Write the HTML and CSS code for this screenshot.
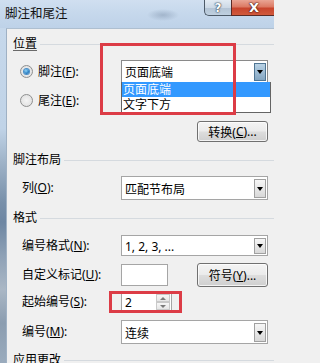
FILE: index.html
```html
<!DOCTYPE html>
<html lang="zh-CN">
<head>
<meta charset="utf-8">
<title>脚注和尾注</title>
<link rel="stylesheet" href="styles.css">
</head>
<body>
<div class="window">
  <div class="titlebar">
    <span class="title">脚注和尾注</span>
    <div class="caption-btns">
      <span class="cbtn help">?</span>
      <span class="cbtn close">X</span>
    </div>
  </div>
  <div class="frame">
    <div class="glass"></div>
    <div class="content">
      <div class="head head-first"><span class="head-text underlined">位置</span><span class="rule"></span></div>

      <div class="row radio-row h23 mt8">
        <div class="lbl radio-lbl"><span class="radio checked"></span>脚注(<u>F</u>):</div>
        <div class="combo open">
          <span class="combo-text">页面底端</span>
          <span class="drop drop-open"><i class="tri"></i></span>
          <div class="listbox">
            <div class="item selected">页面底端</div>
            <div class="item">文字下方</div>
          </div>
        </div>
      </div>

      <div class="row radio-row h23 mt6">
        <div class="lbl radio-lbl"><span class="radio"></span>尾注(<u>E</u>):</div>
      </div>

      <div class="row btn-row h21 mt9">
        <div class="btn">转换(<u>C</u>)...</div>
      </div>

      <div class="head mt10"><span class="head-text">脚注布局</span><span class="rule"></span></div>

      <div class="row h24 mt8">
        <div class="lbl">列(<u>O</u>):</div>
        <div class="combo">
          <span class="combo-text">匹配节布局</span>
          <span class="drop"><i class="tri"></i></span>
        </div>
      </div>

      <div class="head mt10"><span class="head-text">格式</span><span class="rule"></span></div>

      <div class="row h21 mt9">
        <div class="lbl">编号格式(<u>N</u>):</div>
        <div class="combo">
          <span class="combo-text">1, 2, 3, ...</span>
          <span class="drop"><i class="tri"></i></span>
        </div>
      </div>

      <div class="row h24 mt7">
        <div class="lbl">自定义标记(<u>U</u>):</div>
        <div class="field"></div>
        <div class="spacer"></div>
        <div class="btn">符号(<u>Y</u>)...</div>
      </div>

      <div class="row h20 mt5">
        <div class="lbl">起始编号(<u>S</u>):</div>
        <div class="spin">
          <span class="spin-text">2</span>
          <span class="spin-btns">
            <span class="sb"><i class="up"></i></span>
            <span class="sb"><i class="down"></i></span>
          </span>
        </div>
      </div>

      <div class="row h24 mt8">
        <div class="lbl">编号(<u>M</u>):</div>
        <div class="combo">
          <span class="combo-text">连续</span>
          <span class="drop"><i class="tri"></i></span>
        </div>
      </div>

      <div class="head mt8"><span class="head-text">应用更改</span><span class="rule"></span></div>

      <div class="mark mark-1"></div>
      <div class="mark mark-2"></div>
    </div>
  </div>
</div>
</body>
</html>
```
FILE: styles.css
```css
html, body {
  margin: 0;
  padding: 0;
}
body {
  width: 274px;
  height: 363px;
  overflow: hidden;
  background: #f0f0f0;
  font-family: "Noto Sans", "Noto Sans CJK SC", sans-serif;
  font-size: 12px;
  color: #000;
}
u { text-decoration: underline; text-underline-offset: 1px; }

.window {
  width: 274px;
  height: 363px;
  display: flex;
  flex-direction: column;
  overflow: hidden;
}

/* title bar */
.titlebar {
  height: 28px;
  flex: none;
  display: flex;
  align-items: flex-start;
  background:
    radial-gradient(ellipse 16px 6px at 163px 15px, rgba(120,140,165,0.45), rgba(120,140,165,0) 100%),
    linear-gradient(180deg, #d0dff0 0%, #c6d8ec 45%, #bed2e8 100%);
}
.title {
  margin-left: 5px;
  line-height: 27px;
  font-size: 12.5px;
  color: #111;
}
.caption-btns {
  margin-left: auto;
  display: flex;
  height: 16px;
}
.cbtn {
  box-sizing: border-box;
  height: 16px;
  display: flex;
  align-items: center;
  justify-content: center;
  font-family: "DejaVu Sans", sans-serif;
  font-weight: bold;
  color: #fff;
  border: 1px solid #4d5a68;
  border-top: none;
}
.help {
  width: 27px;
  border-radius: 0 0 0 5px;
  border-right: none;
  font-size: 12px;
  background: linear-gradient(180deg, #e3ebf3 0%, #cdd9e6 50%, #b3c3d4 51%, #bfd0e0 100%);
  text-shadow: 0 0 1px #3b4a5a, 0 0 1px #3b4a5a, 0 0 2px #3b4a5a;
}
.close {
  width: 46px;
  margin-right: -3px;
  font-size: 13px;
  background: linear-gradient(180deg, #e9a594 0%, #dc7a64 45%, #c8452d 55%, #d15a3d 100%);
  border-color: #5a2b25;
  text-shadow: 0 0 1px #4a1c16, 0 0 1px #4a1c16, 0 0 2px #4a1c16;
}

/* frame */
.frame {
  flex: 1;
  display: flex;
  min-height: 0;
}
.glass {
  width: 6px;
  flex: none;
  background: linear-gradient(180deg, #c6d8eb 0%, #c0d3e7 30%, #9fb3c8 40%, #7890aa 52%, #6d86a2 58%, #8ea1b6 68%, #aab7c5 78%, #8b9db0 88%, #9aabbd 100%);
}
.content {
  flex: 1;
  position: relative;
  background: #f0f0f0;
  border-left: 1px solid #9fb1c4;
  border-top: 1px solid #aebfd0;
}

/* section heads */
.head {
  height: 16px;
  display: flex;
  align-items: center;
  padding-left: 6px;
}
.head-first { margin-top: 7px; }
.head-text {
  line-height: 16px;
  white-space: nowrap;
}
.underlined {
  text-decoration: underline;
  text-decoration-color: #6a6a6a;
  text-underline-offset: 2px;
}
.rule {
  flex: 1;
  height: 1px;
  margin-left: 3px;
  background: #d5dadf;
}

/* rows */
.row {
  display: flex;
  align-items: center;
  padding-left: 15px;
  padding-right: 6px;
}
.radio-row { padding-left: 13px; }
.btn-row { justify-content: flex-end; }
.h20 { height: 20px; }
.h21 { height: 21px; }
.h23 { height: 23px; }
.h24 { height: 24px; }
.mt5 { margin-top: 5px; }
.mt6 { margin-top: 6px; }
.mt7 { margin-top: 7px; }
.mt8 { margin-top: 8px; }
.mt9 { margin-top: 9px; }
.mt10 { margin-top: 10px; }

.lbl {
  width: 99px;
  flex: none;
  white-space: nowrap;
  line-height: 16px;
}
.radio-lbl {
  width: 101px;
  display: flex;
  align-items: center;
}
.radio {
  width: 13px;
  height: 13px;
  box-sizing: border-box;
  border-radius: 50%;
  border: 1px solid #8e8f8f;
  background: radial-gradient(circle at 50% 50%, #f4f4f4 0%, #dcdcdc 100%);
  margin-right: 5px;
  display: flex;
  align-items: center;
  justify-content: center;
}
.radio.checked::after {
  content: "";
  width: 5px;
  height: 5px;
  border-radius: 50%;
  background: radial-gradient(circle at 40% 35%, #8fd4f7 0%, #2a7fc4 60%, #1c5f9b 100%);
  box-shadow: 0 0 0 1px #4a8fc8;
}

/* combo */
.combo {
  position: relative;
  flex: 1;
  height: 100%;
  box-sizing: border-box;
  border: 1px solid #a5a5a5;
  background: #fff;
  display: flex;
  align-items: stretch;
  padding: 2px 1px 1px 3px;
}
.combo.open { border-color: #8a8a8a; }
.combo-text {
  flex: 1;
  display: flex;
  align-items: center;
  white-space: nowrap;
}
.drop {
  width: 12px;
  flex: none;
  box-sizing: border-box;
  border: 1px solid #a0a0a0;
  background: linear-gradient(180deg, #f6f6f6 0%, #e8e8e8 50%, #d8d8d8 100%);
  display: flex;
  align-items: center;
  justify-content: center;
}
.drop-open {
  border-color: #4f7593;
  background: linear-gradient(180deg, #b9d2e5 0%, #9ebcd4 50%, #85a6c1 100%);
}
.tri {
  width: 0;
  height: 0;
  border-left: 3px solid transparent;
  border-right: 3px solid transparent;
  border-top: 4px solid #000;
}

/* dropdown list */
.listbox {
  position: absolute;
  left: -1px;
  top: 100%;
  width: 150px;
  box-sizing: border-box;
  border: 1px solid #646464;
  border-top: none;
  background: #fff;
  z-index: 2;
}
.item {
  height: 15px;
  line-height: 15px;
  padding-left: 1px;
  white-space: nowrap;
}
.item.selected {
  background: #3399ff;
  color: #fff;
}

/* buttons */
.btn {
  width: 71px;
  height: 100%;
  flex: none;
  box-sizing: border-box;
  border: 1px solid #707070;
  border-radius: 3px;
  background: linear-gradient(180deg, #f4f4f4 0%, #ebebeb 48%, #dddddd 52%, #cfcfcf 100%);
  box-shadow: inset 0 0 0 1px rgba(255,255,255,0.75);
  display: flex;
  align-items: center;
  justify-content: center;
  white-space: nowrap;
}

/* fields */
.field {
  width: 47px;
  height: 22px;
  box-sizing: border-box;
  border: 1px solid #a5a5a5;
  background: #fff;
  flex: none;
}
.spacer { flex: 1; }

.spin {
  width: 51px;
  height: 100%;
  box-sizing: border-box;
  border: 1px solid #a5a5a5;
  background: #fff;
  display: flex;
  padding: 1px 1px 1px 3px;
}
.spin-text {
  flex: 1;
  display: flex;
  align-items: center;
}
.spin-btns {
  width: 14px;
  display: flex;
  flex-direction: column;
}
.sb {
  flex: 1;
  box-sizing: border-box;
  border: 1px solid #c9c9c9;
  background: linear-gradient(180deg, #f7f7f7 0%, #e6e6e6 100%);
  display: flex;
  align-items: center;
  justify-content: center;
}
.up {
  width: 0; height: 0;
  border-left: 3px solid transparent;
  border-right: 3px solid transparent;
  border-bottom: 3px solid #7a7a7a;
}
.down {
  width: 0; height: 0;
  border-left: 3px solid transparent;
  border-right: 3px solid transparent;
  border-top: 3px solid #7a7a7a;
}

/* red annotation boxes */
.mark {
  position: absolute;
  box-sizing: border-box;
  border: 3px solid #dc3c46;
  z-index: 5;
}
.mark-1 { left: 93px; top: 14px; width: 136px; height: 72px; }
.mark-2 { left: 102px; top: 262px; width: 73px; height: 22px; }
```
